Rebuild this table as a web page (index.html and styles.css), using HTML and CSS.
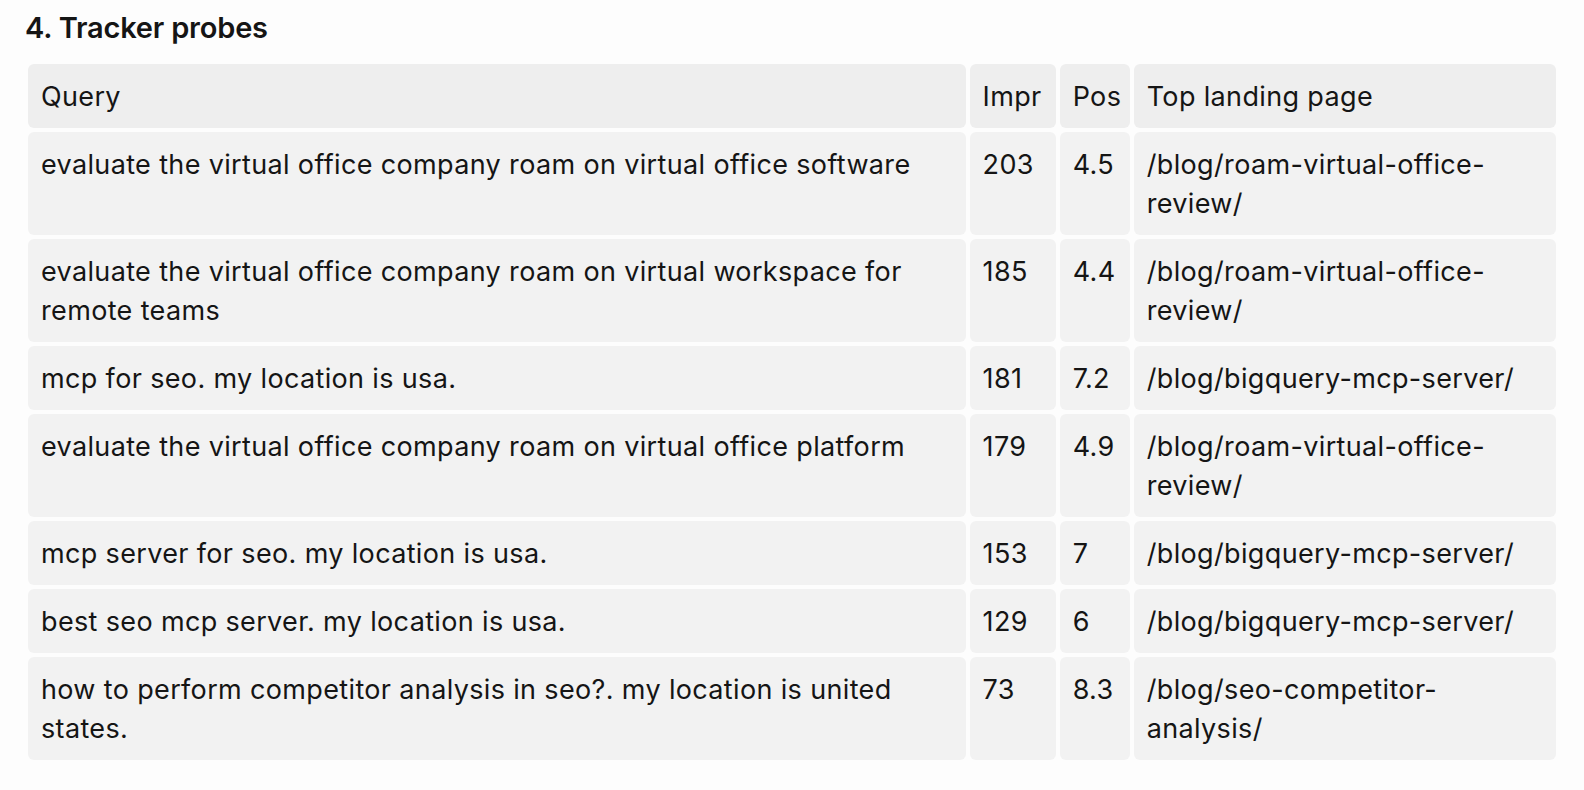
FILE: index.html
```html
<!DOCTYPE html>
<html lang="en">
<head>
<meta charset="utf-8">
<title>Tracker probes</title>
<link rel="stylesheet" href="styles.css">
</head>
<body>
<main class="page">
  <h2 class="section-title">4. Tracker probes</h2>
  <table class="probes">
    <colgroup>
      <col class="col-query">
      <col class="col-impr">
      <col class="col-pos">
      <col class="col-page">
    </colgroup>
    <thead>
      <tr><th>Query</th><th>Impr</th><th>Pos</th><th>Top landing page</th></tr>
    </thead>
    <tbody>
      <tr><td>evaluate the virtual office company roam on virtual office software</td><td>203</td><td>4.5</td><td>/blog/roam-virtual-office-review/</td></tr>
      <tr><td>evaluate the virtual office company roam on virtual workspace for remote teams</td><td>185</td><td>4.4</td><td>/blog/roam-virtual-office-review/</td></tr>
      <tr><td>mcp for seo. my location is usa.</td><td>181</td><td>7.2</td><td>/blog/bigquery-mcp-server/</td></tr>
      <tr><td>evaluate the virtual office company roam on virtual office platform</td><td>179</td><td>4.9</td><td>/blog/roam-virtual-office-review/</td></tr>
      <tr><td>mcp server for seo. my location is usa.</td><td>153</td><td>7</td><td>/blog/bigquery-mcp-server/</td></tr>
      <tr><td>best seo mcp server. my location is usa.</td><td>129</td><td>6</td><td>/blog/bigquery-mcp-server/</td></tr>
      <tr><td>how to perform competitor analysis in seo?. my location is united states.</td><td>73</td><td>8.3</td><td>/blog/seo-competitor-analysis/</td></tr>
    </tbody>
  </table>
</main>
</body>
</html>
```

FILE: styles.css
```css
html, body {
  margin: 0;
  background: #fdfdfd;
}

body {
  font-family: Inter, "Noto Sans", "Liberation Sans", sans-serif;
  color: #151515;
}

.page {
  padding: 10px 24px 0 24px;
}

.section-title {
  margin: 0 0 14px 1px;
  font-size: 29px;
  line-height: 36px;
  font-weight: 600;
  letter-spacing: -0.2px;
}

.probes {
  width: 1536px;
  table-layout: fixed;
  border-collapse: separate;
  border-spacing: 4px;
  font-size: 27px;
  line-height: 39px;
  letter-spacing: 0.35px;
}

.col-query { width: 937px; }
.col-impr { width: 86px; }
.col-pos { width: 70px; }
.col-page { width: 422px; }

.probes th,
.probes td {
  padding: 12.5px 12px 12.5px 13px;
  text-align: left;
  vertical-align: top;
  font-weight: 400;
  border-radius: 6px;
  background: #f2f2f2;
}

.probes th {
  background: #eeeeee;
}
```
